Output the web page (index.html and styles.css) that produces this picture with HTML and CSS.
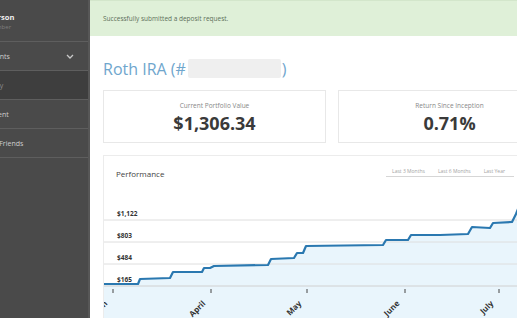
FILE: index.html
```html
<!DOCTYPE html>
<html>
<head>
  <title>Roth IRA</title>
  <link rel="stylesheet" href="styles.css">
</head>
<body>
  <!-- sidebar -->
  <div class="sidebar">
    <div class="side-inner">
      <div class="profile">
        <div class="profile-name">Jane Anderson</div>
        <div class="profile-sub">Premium Member</div>
      </div>
      <div class="nav-item">
        <span class="nav-text">Accounts</span>
        <svg class="chev" width="8" height="5" viewBox="0 0 8 5"><polyline points="1,1 4,4 7,1" fill="none" stroke="#c8c8c8" stroke-width="1.3"/></svg>
      </div>
      <div class="nav-item active"><span class="nav-text">Activity</span></div>
      <div class="nav-item"><span class="nav-text">Payment</span></div>
      <div class="nav-item"><span class="nav-text">Refer Friends</span></div>
    </div>
  </div>

  <!-- main -->
  <div class="main">
    <div class="alert">Successfully submitted a deposit request.</div>

    <div class="content">
      <h1 class="title">Roth IRA (#<span class="redacted"></span>)</h1>

      <div class="stats">
        <div class="stat-card">
          <div class="stat-label">Current Portfolio Value</div>
          <div class="stat-value">$1,306.34</div>
        </div>
        <div class="stat-card">
          <div class="stat-label">Return Since Inception</div>
          <div class="stat-value">0.71%</div>
        </div>
      </div>

      <div class="perf-card">
        <div class="perf-head">
          <div class="perf-title">Performance</div>
          <div class="tabs">
            <span>Last 3 Months</span>
            <span>Last 6 Months</span>
            <span>Last Year</span>
          </div>
        </div>
        <svg class="chart" width="420" height="130" viewBox="0 0 420 130">
          <polygon class="area" points="0,95 34,95 36,90 66,89 69,83 98,83 100,79 106,79 110,77 164,76 167,70 190,69 193,64 199,64 202,57 240,56.5 279,56 282,51 304,51 307,46 336,46 364,45 368,38 386,39 389,34 408,33 412,25 416,15 420,8 420,130 0,130"/>
          <line class="grid" x1="0" y1="31" x2="420" y2="31"/>
          <line class="grid" x1="0" y1="53" x2="420" y2="53"/>
          <line class="grid" x1="0" y1="75" x2="420" y2="75"/>
          <line class="axis" x1="0" y1="97" x2="420" y2="97"/>
          <polyline class="line" points="0,95 34,95 36,90 66,89 69,83 98,83 100,79 106,79 110,77 164,76 167,70 190,69 193,64 199,64 202,57 240,56.5 279,56 282,51 304,51 307,46 336,46 364,45 368,38 386,39 389,34 408,33 412,25 416,15 420,8"/>
          <text class="ylabel" x="13" y="27">$1,122</text>
          <text class="ylabel" x="13" y="49">$803</text>
          <text class="ylabel" x="13" y="71">$484</text>
          <text class="ylabel" x="13" y="93">$165</text>
          <g class="ticks">
            <line x1="9" y1="100" x2="9" y2="104"/>
            <line x1="107" y1="100" x2="107" y2="104"/>
            <line x1="203" y1="100" x2="203" y2="104"/>
            <line x1="301" y1="100" x2="301" y2="104"/>
            <line x1="395" y1="100" x2="395" y2="104"/>
          </g>
          <text class="xlabel" transform="translate(4,115) rotate(-45)">March</text>
          <text class="xlabel" transform="translate(102,115) rotate(-45)">April</text>
          <text class="xlabel" transform="translate(198,115) rotate(-45)">May</text>
          <text class="xlabel" transform="translate(296,115) rotate(-45)">June</text>
          <text class="xlabel" transform="translate(390,115) rotate(-45)">July</text>
        </svg>
      </div>
    </div>
  </div>
</body>
</html>
```
FILE: styles.css
```css
body {
  margin: 0;
  display: flex;
  height: 318px;
  overflow: hidden;
  font-family: "Open Sans", Arial, sans-serif;
  background: #fff;
}

/* sidebar */
.sidebar {
  width: 88px;
  flex: none;
  background: #4a4a4a;
  border-right: 2px solid #575757;
  overflow: hidden;
}

.side-inner {
  margin-left: -40px;
  width: 128px;
}

.profile {
  height: 42px;
  padding: 12px 0 0 0;
  box-sizing: border-box;
  border-bottom: 1px solid #5e5e5e;
}

.profile-name {
  color: #f0f0f0;
  font-size: 7.5px;
  font-weight: bold;
  line-height: 10px;
}

.profile-sub {
  color: #7e7e7e;
  font-size: 6px;
  line-height: 10px;
}

.nav-item {
  display: flex;
  align-items: center;
  height: 28px;
  padding-left: 20px;
  border-bottom: 1px solid #5e5e5e;
  color: #cfcfcf;
  font-size: 7px;
}

.nav-item.active {
  background: #3e3e3e;
  color: #8c8c8c;
}

.chev {
  margin-left: 56px;
}

/* main */
.main {
  flex: 1;
  overflow: hidden;
}

.alert {
  height: 36px;
  line-height: 36px;
  padding-left: 13px;
  background: #dff0d8;
  border-top: 1px solid #d3e6cb;
  box-sizing: border-box;
  color: #5d6f58;
  font-size: 6.5px;
  white-space: nowrap;
}

.content {
  padding-left: 13px;
}

.title {
  margin: 0;
  height: 54px;
  line-height: 66px;
  font-size: 16px;
  font-weight: normal;
  color: #6fa6cd;
  white-space: nowrap;
}

.redacted {
  display: inline-block;
  width: 93px;
  height: 19px;
  margin: 0 1px 0 2px;
  vertical-align: -3px;
  background: #efefef;
  border-radius: 2px;
}

.stats {
  display: grid;
  grid-template-columns: 223px 223px;
  gap: 12px;
}

.stat-card {
  height: 53px;
  box-sizing: border-box;
  border: 1px solid #e8e8e8;
  text-align: center;
  padding-top: 10px;
}

.stat-label {
  font-size: 6.5px;
  color: #888;
  line-height: 9px;
}

.stat-value {
  margin-top: 3px;
  font-size: 18px;
  font-weight: bold;
  color: #3a3a3a;
  line-height: 20px;
}

.perf-card {
  margin-top: 12px;
  width: 424px;
  height: 200px;
  border: 1px solid #ececec;
  box-sizing: border-box;
}

.perf-head {
  display: flex;
  justify-content: space-between;
  height: 33px;
  padding: 0 12px 0 12px;
}

.perf-title {
  font-size: 8px;
  color: #444;
  line-height: 35px;
}

.tabs {
  display: flex;
  gap: 13px;
  height: 10px;
  margin-top: 10px;
  padding: 0 9px 0 6px;
  border-bottom: 1px solid #d6d6d6;
  font-size: 5px;
  line-height: 11px;
  color: #a3a3a3;
}

.chart {
  display: block;
}

.area {
  fill: #e9f5fc;
}

.grid {
  stroke: #dedede;
  stroke-width: 1;
}

.axis {
  stroke: #d0d0d0;
  stroke-width: 1;
}

.line {
  fill: none;
  stroke: #2a78b0;
  stroke-width: 2.2;
  stroke-linejoin: round;
}

.ylabel {
  font-size: 6.5px;
  font-weight: bold;
  fill: #333;
}

.ticks line {
  stroke: #444;
  stroke-width: 1;
}

.xlabel {
  font-size: 8px;
  font-weight: bold;
  fill: #333;
  text-anchor: end;
}
```
